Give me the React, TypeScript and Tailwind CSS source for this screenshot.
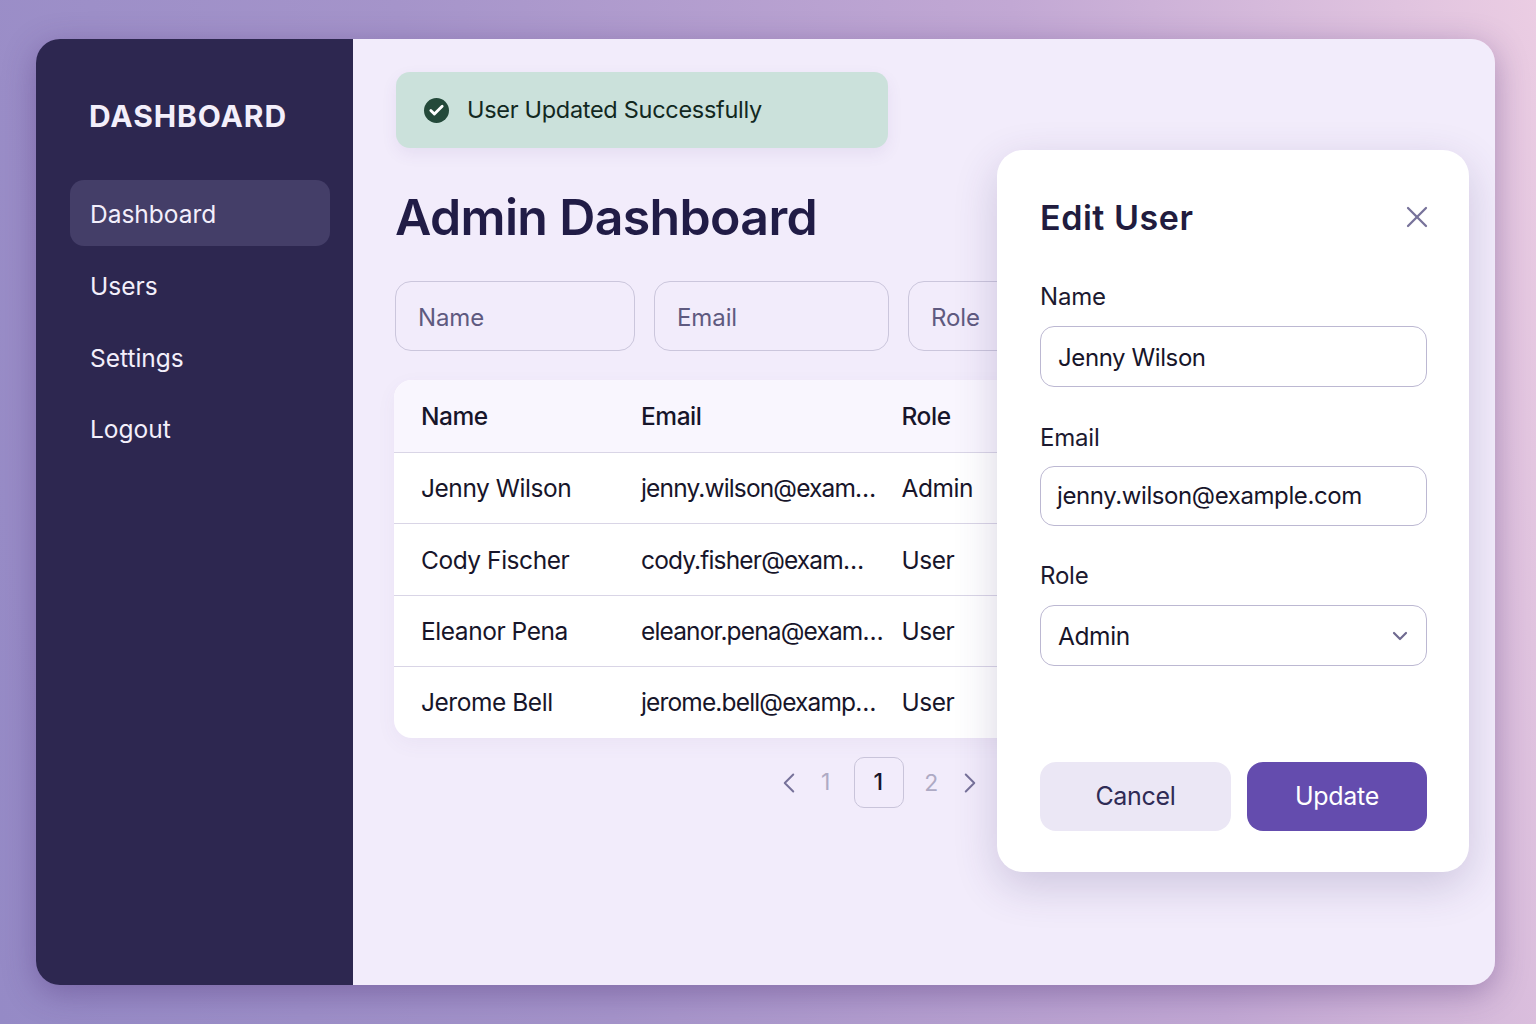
import React from "react";
import { Check, ChevronDown, ChevronLeft, ChevronRight, X } from "lucide-react";

const rows = [
  ["Jenny Wilson", "jenny.wilson@exam…", "Admin"],
  ["Cody Fischer", "cody.fisher@exam…", "User"],
  ["Eleanor Pena", "eleanor.pena@exam…", "User"],
  ["Jerome Bell", "jerome.bell@examp…", "User"],
];

export default function App() {
  return (
    <div className="h-[1024px] w-full overflow-hidden bg-[linear-gradient(78deg,#958ac6_0%,#a594ca_35%,#c2a8d4_70%,#ebcde3_100%)] pt-[39px] pb-[39px] pl-[36px] pr-[41px] font-['Inter',sans-serif]">
      <div className="flex h-[946px] overflow-hidden rounded-[24px] shadow-[0_8px_32px_rgba(70,40,110,0.38)]">
        <aside className="flex w-[317px] shrink-0 flex-col bg-[#2d2750] pl-[34px] pr-[23px] pt-[59px]">
          <div className="ml-[19px] text-[30px] font-bold leading-[36px] tracking-[0.9px] text-[#f3effb]">DASHBOARD</div>
          <nav className="mt-[46px] flex flex-col gap-[6px] text-[24.5px] text-[#f3effb]">
            <div className="flex h-[66px] items-center rounded-[14px] bg-[#443e68] pl-[20px] pt-[2px]">Dashboard</div>
            <div className="flex h-[66px] items-center pl-[20px] pt-[2px]">Users</div>
            <div className="flex h-[66px] items-center pl-[20px] pt-[2px]">Settings</div>
            <div className="flex h-[66px] items-center pl-[20px]">Logout</div>
          </nav>
        </aside>

        <main className="relative min-w-0 flex-1 overflow-hidden bg-[#f2ecfb] pl-[42px] pt-[33px]">
          <div className="ml-[1px] flex h-[76px] w-[492px] items-center rounded-[14px] bg-[#cbe1db] pl-[28px] shadow-[0_6px_16px_rgba(90,70,140,0.08)]">
            <span className="flex h-[25px] w-[25px] items-center justify-center rounded-full bg-[#24493a]">
              <Check size={17} strokeWidth={4} className="text-white" />
            </span>
            <span className="ml-[18px] text-[23.5px] tracking-[-0.3px] text-[#12281f]">User Updated Successfully</span>
          </div>

          <h1 className="mt-[39px] text-[50px] font-semibold leading-[60px] tracking-[-0.65px] text-[#211c46]">Admin Dashboard</h1>

          <div className="mt-[34px] flex gap-[19px] text-[24px] tracking-[-0.1px] text-[#5f5a80]">
            <div className="flex h-[70px] w-[240px] shrink-0 items-center rounded-[16px] border border-[#cbc6dc] pl-[22px] pt-[4px]">Name</div>
            <div className="flex h-[70px] w-[235px] shrink-0 items-center rounded-[16px] border border-[#cbc6dc] pl-[22px] pt-[4px]">Email</div>
            <div className="flex h-[70px] w-[235px] shrink-0 items-center rounded-[16px] border border-[#cbc6dc] pl-[22px] pt-[4px]">Role</div>
          </div>

          <div className="-ml-[1px] mt-[29px] w-[760px] overflow-hidden rounded-[18px] bg-white text-[24.5px] tracking-[-0.45px] text-[#17152a] shadow-[0_6px_20px_rgba(90,70,140,0.05)]">
            <div className="grid h-[73px] grid-cols-[220px_260.5px_1fr] items-center border-b border-[#d9d5e6] bg-[#f9f6fe] pl-[27px] pt-[1px] font-medium">
              <div>Name</div>
              <div>Email</div>
              <div>Role</div>
            </div>
            {rows.map((r, i) => (
              <div key={r[0]} className={`grid h-[71.25px] grid-cols-[220px_260.5px_1fr] items-center pl-[27px] ${i < 3 ? "border-b border-[#d9d5e6] pt-[1px]" : ""}`}>
                <div>{r[0]}</div>
                <div className="whitespace-nowrap tracking-[-0.85px]">{r[1]}</div>
                <div>{r[2]}</div>
              </div>
            ))}
          </div>

          <div className="ml-[377px] mt-[19px] flex h-[51px] items-center text-[23px] text-[#aeaac4]">
            <ChevronLeft size={34} strokeWidth={1.4} className="text-[#77729a]" />
            <span className="ml-[15px]">1</span>
            <span className="ml-[24px] flex h-[51px] w-[50px] items-center justify-center rounded-[10px] border border-[#c9c4da] pr-[2px] font-medium text-[#17152a]">1</span>
            <span className="ml-[20px] pt-[1px]">2</span>
            <ChevronRight size={34} strokeWidth={1.4} className="ml-[15px] text-[#77729a]" />
          </div>

          <div className="absolute left-[644px] top-[111px] h-[722px] w-[472px] rounded-[26px] bg-white pl-[43px] pr-[42px] pt-[43px] shadow-[0_14px_44px_rgba(60,45,110,0.2)]">
            <div className="flex h-[48px] items-center justify-between">
              <h2 className="text-[34px] font-semibold tracking-[0.55px] text-[#211c3e]">Edit User</h2>
              <X size={36} strokeWidth={1.5} className="-mr-[8px] text-[#77729a]" />
            </div>

            <div className="mt-[41px] text-[24px] leading-[30px] tracking-[-0.2px] text-[#1c1a30]">Name</div>
            <div className="mt-[14px] flex h-[61px] items-center rounded-[14px] border border-[#bcb8d2] bg-white pl-[17px] pt-[2px] text-[24px] tracking-[-0.4px] text-[#17152a]">Jenny Wilson</div>

            <div className="mt-[36px] text-[24px] leading-[30px] tracking-[-0.2px] text-[#1c1a30]">Email</div>
            <div className="mt-[13px] flex h-[60px] items-center rounded-[14px] border border-[#bcb8d2] bg-white pl-[16px] text-[24px] tracking-[-0.4px] text-[#17152a]">jenny.wilson@example.com</div>

            <div className="mt-[35px] text-[24px] leading-[30px] tracking-[-0.2px] text-[#1c1a30]">Role</div>
            <div className="mt-[14px] flex h-[61px] items-center justify-between rounded-[14px] border border-[#bcb8d2] bg-white pl-[17px] pr-[14px] text-[24.5px] tracking-[-0.4px] text-[#17152a]">
              <span className="pt-[2px]">Admin</span>
              <ChevronDown size={24} strokeWidth={2.2} className="text-[#6f6a90]" />
            </div>

            <div className="mt-[96px] flex gap-[16px] text-[25px] tracking-[-0.3px]">
              <div className="flex h-[69px] w-[191px] items-center justify-center rounded-[16px] bg-[#ebe7f5] text-[#2f2b55]">Cancel</div>
              <div className="flex h-[69px] w-[180px] items-center justify-center rounded-[16px] bg-[#644cae] text-white">Update</div>
            </div>
          </div>
        </main>
      </div>
    </div>
  );
}
